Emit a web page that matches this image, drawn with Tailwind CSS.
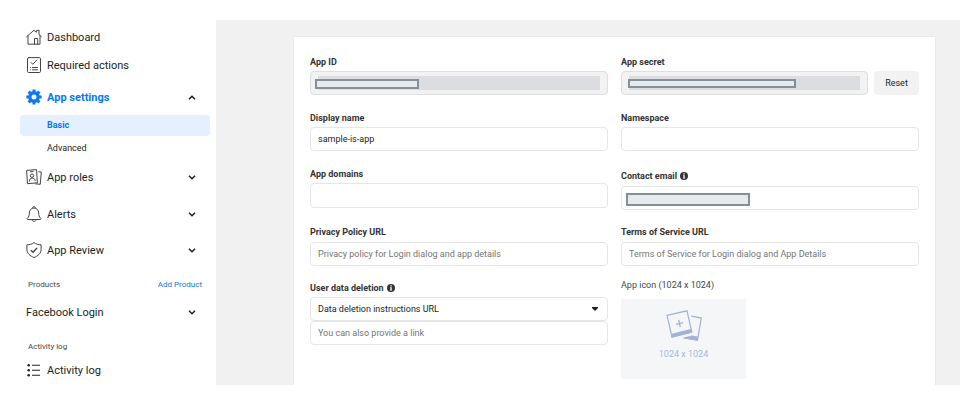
<!DOCTYPE html>
<html lang="en">
<head>
<meta charset="utf-8">
<title>App settings - Basic</title>
<script src="https://cdn.jsdelivr.net/npm/@tailwindcss/browser@4"></script>
</head>
<body class="bg-white font-['Roboto','Liberation_Sans',sans-serif] text-[#1c1e21]">
<div class="flex pt-5 pr-5 pl-5">
  <nav class="w-[196px] shrink-0 pt-[3px] pr-[6px] text-[11px] leading-[17px]" aria-label="App">
    <a href="#" class="flex h-7 items-center gap-[5px] pl-[6px]">
      <svg class="size-4" viewBox="0 0 16 16" fill="none" stroke="#444" stroke-width="1" stroke-linejoin="round" stroke-linecap="round"><path d="M.6 7.800 8 1.200l2.400 2.100V1.700l2.600-.7v4.600l2.400 2.200M2 6.700V15.200h12V6.700M8.500 15V9.500h3.200V15"/></svg>
      Dashboard</a>
    <a href="#" class="flex h-7 items-center gap-[5px] pl-[6px]">
      <svg class="size-4" viewBox="0 0 16 16" fill="none" stroke="#444" stroke-width="1" stroke-linecap="round"><rect x="1.500" y=".6" width="13" height="14.900" rx="1.200"/><path d="m5 5.500 1.800 1.800L10.800 3M6.500 10.500h5M6.500 12.800h5M4.300 10.500h.1M4.300 12.800h.1"/></svg>
      Required actions</a>
    <button type="button" class="flex h-9 w-full items-center gap-[5px] pr-[14px] pl-[6px] font-bold text-[#0a78f0]" aria-expanded="true">
      <svg class="size-4" viewBox="0 0 16 16" fill="none" stroke="#0a78f0"><circle cx="8" cy="8" r="4.200" stroke-width="3.400"/><path stroke-width="3" stroke-linecap="butt" d="M8 .4v2.400M8 13.200v2.400M.4 8h2.400M13.200 8h2.400M2.600 2.600l1.700 1.700M11.700 11.700l1.700 1.700M13.400 2.600l-1.700 1.700M4.300 11.700l-1.700 1.700"/></svg>
      App settings
      <svg class="ml-auto size-2" viewBox="0 0 8 8" fill="none" stroke="#1c1e21" stroke-width="1.500"><path d="M1 6.300 4 3.300l3 3"/></svg></button>
    <a href="#" class="flex h-[21px] items-center rounded bg-[#e5f0fe] pl-[27px] text-[9px] font-bold text-[#0a78f0]" aria-current="page">Basic</a>
    <a href="#" class="mt-px flex h-[22px] items-center pl-[27px] text-[9px]">Advanced</a>
    <button type="button" class="flex h-9 w-full items-center gap-[5px] pr-[14px] pl-[6px]">
      <svg class="size-4" viewBox="0 0 16 16" fill="none" stroke="#444" stroke-width="1" stroke-linejoin="round"><path d="M.6 1.400 10.500.6l.9 13.200-9.900.9zM12.300 2.700l3 .4-1.100 12.200-5-.5M4 2.800l3.500-.3"/><circle cx="6" cy="6.700" r="1.700"/><path d="M3.400 12.500c-.1-2.200 1-3.300 2.700-3.400 1.700-.1 2.900.9 3.100 3"/></svg>
      App roles
      <svg class="ml-auto size-2" viewBox="0 0 8 8" fill="none" stroke="#1c1e21" stroke-width="1.500"><path d="m1 2.800 3 3 3-3"/></svg></button>
    <button type="button" class="mt-px flex h-9 w-full items-center gap-[5px] pr-[14px] pl-[6px]">
      <svg class="size-4" viewBox="0 0 16 16" fill="none" stroke="#444" stroke-width="1" stroke-linejoin="round"><path d="M1 12.500c2.200-1.700 2.200-3.500 2.300-5.500C3.500 4 5.200 2 8 2s4.500 2 4.700 5c.1 2 .1 3.800 2.300 5.500 0 .6-.4 1-1 1H2c-.6 0-1-.4-1-1zM6.700 2.100c-.2-2 2.800-2 2.600 0M6 13.600c.2 2.300 3.800 2.300 4 0"/></svg>
      Alerts
      <svg class="ml-auto size-2" viewBox="0 0 8 8" fill="none" stroke="#1c1e21" stroke-width="1.500"><path d="m1 2.800 3 3 3-3"/></svg></button>
    <button type="button" class="flex h-9 w-full items-center gap-[5px] pr-[14px] pl-[6px]">
      <svg class="size-4" viewBox="0 0 16 16" fill="none" stroke="#444" stroke-width="1" stroke-linejoin="round"><path d="M8 .6C6 2.200 3.500 2.800.9 2.800v4.700c0 3.700 3.100 6.500 7.100 8 4-1.500 7.100-4.300 7.100-8V2.800C12.500 2.800 10 2.200 8 .6z"/><path stroke-width="1.400" d="m4.800 8.200 2.200 2.100 4-4.200"/></svg>
      App Review
      <svg class="ml-auto size-2" viewBox="0 0 8 8" fill="none" stroke="#1c1e21" stroke-width="1.500"><path d="m1 2.800 3 3 3-3"/></svg></button>
    <div class="flex h-8 items-center justify-between pr-2 pl-2 text-[8px] text-[#444950]">
      <h2>Products</h2><a href="#" class="text-[#1876d8]">Add Product</a></div>
    <button type="button" class="flex h-6 w-full items-center pr-[14px] pl-[6px]">
      Facebook Login
      <svg class="ml-auto size-2" viewBox="0 0 8 8" fill="none" stroke="#1c1e21" stroke-width="1.500"><path d="m1 2.800 3 3 3-3"/></svg></button>
    <h2 class="mt-3 flex h-5 items-center pl-2 text-[8px] text-[#444950]">Activity log</h2>
    <a href="#" class="flex h-7 items-center gap-[5px] pl-[6px]">
      <svg class="size-4" viewBox="0 0 16 16" fill="none" stroke="#222" stroke-width="1.100"><path d="M6 3.300h8M6 8.300h8M6 13.300h8"/><g fill="#222" stroke="none"><circle cx="2.700" cy="3.300" r="1.300"/><circle cx="2.700" cy="8.300" r="1.300"/><circle cx="2.700" cy="13.300" r="1.300"/></g></svg>
      Activity log</a>
  </nav>

  <main class="grow bg-[#f1f1f1] pt-[17px] pr-[25px] pl-[78px]">
    <form class="grid grid-cols-2 gap-x-[13px] bg-white px-4 pt-[17px] pb-[6px] text-[9px] leading-4 shadow-[0_0_1px_#ccc]">
      <div>
        <label for="app-id" class="block font-bold text-[#333]">App ID</label>
        <div class="relative mt-px flex h-6 items-center rounded border border-[#dfdfdf] bg-[#f2f2f2] px-[7px]">
          <input id="app-id" disabled class="h-[14px] w-full bg-[#dcdde1]">
          <span class="absolute top-[7px] left-1 h-[10px] w-[104px] border-2 border-[#848f97] bg-[#e6eaed]"></span>
        </div>
        <label for="display-name" class="mt-[15px] block font-bold text-[#333]">Display name</label>
        <input id="display-name" value="sample-is-app" class="mt-px block h-6 w-full rounded border border-[#e6e6e6] px-[7px]">
        <label for="domains" class="mt-[15px] block font-bold text-[#333]">App domains</label>
        <input id="domains" class="mt-px block h-[25px] w-full rounded border border-[#e6e6e6] px-[7px]">
        <label for="privacy" class="mt-4 block font-bold text-[#333]">Privacy Policy URL</label>
        <input id="privacy" placeholder="Privacy policy for Login dialog and app details" class="mt-[2px] block h-6 w-full rounded border border-[#e6e6e6] px-[7px] placeholder:text-[#757575]">
        <label for="deletion" class="mt-[14px] flex items-center gap-[3px] font-bold text-[#333]">User data deletion
          <svg class="size-2" viewBox="0 0 8 8"><circle cx="4" cy="4" r="4" fill="#333"/><path fill="#fff" d="M3.400 1.300h1.300v1.200H3.400zM3 3.200h1.700v2.500h.5v.8H2.900v-.8h.5V4H3z"/></svg></label>
        <div class="relative mt-px">
          <select id="deletion" class="block h-6 w-full appearance-none rounded border border-[#e6e6e6] px-[7px]"><option>Data deletion instructions URL</option></select>
          <svg class="pointer-events-none absolute top-[10px] right-[10px] h-1 w-[6px]" viewBox="0 0 6 4"><path fill="#1c1e21" d="M0 0h6v1L3 4 0 1z"/></svg>
        </div>
        <input aria-label="Data deletion link" placeholder="You can also provide a link" class="block h-6 w-full rounded border border-[#e6e6e6] px-[7px] placeholder:text-[#757575]">
      </div>
      <div>
        <label for="secret" class="block font-bold text-[#333]">App secret</label>
        <div class="mt-px flex gap-[6px]">
          <div class="relative flex h-6 grow items-center rounded border border-[#dfdfdf] bg-[#f2f2f2] px-[7px]">
            <input id="secret" disabled class="h-[14px] w-full bg-[#dcdde1]">
            <span class="absolute top-[7px] left-[6px] h-[9px] w-[168px] border-2 border-[#848f97] bg-[#e6eaed]"></span>
          </div>
          <button type="button" class="h-6 w-[45px] rounded bg-[#f2f2f2]">Reset</button>
        </div>
        <label for="namespace" class="mt-[15px] block font-bold text-[#333]">Namespace</label>
        <input id="namespace" class="mt-px block h-6 w-full rounded border border-[#e6e6e6] px-[7px]">
        <label for="email" class="mt-[17px] flex items-center gap-[3px] font-bold text-[#333]">Contact email
          <svg class="size-2" viewBox="0 0 8 8"><circle cx="4" cy="4" r="4" fill="#333"/><path fill="#fff" d="M3.400 1.300h1.300v1.200H3.400zM3 3.200h1.700v2.500h.5v.8H2.900v-.8h.5V4H3z"/></svg></label>
        <div class="relative mt-[2px]">
          <input id="email" type="email" class="block h-6 w-full rounded border border-[#e6e6e6] px-[7px]">
          <span class="absolute top-[7px] left-[5px] h-[13px] w-[124px] border-2 border-[#848f97] bg-[#e6eaed]"></span>
        </div>
        <label for="terms" class="mt-[14px] block font-bold text-[#333]">Terms of Service URL</label>
        <input id="terms" placeholder="Terms of Service for Login dialog and App Details" class="mt-[2px] block h-6 w-full rounded border border-[#e6e6e6] px-[7px] placeholder:text-[#757575]">
        <h3 id="icon-label" class="mt-[11px] text-[#444950]">App icon (1024 x 1024)</h3>
        <button type="button" aria-labelledby="icon-label" class="mt-[6px] flex h-20 w-[125px] flex-col items-center bg-[#f5f6f8] pt-[10px] text-[#a5b9da]">
          <svg class="h-8 w-9" viewBox="0 0 36 32" fill="none" stroke="#a3b2d6"><path d="m25.500 7.200 9.800 1.900-3.800 22-13-2.300" stroke-width="1.200"/><path fill="#a3b2d6" stroke="none" d="m26 26.500 6 1-.7 4.300-15.300-2.700z"/><path d="m1 6.300 20-4.500L25.800 23 6 28z" fill="#f5f6f8" stroke-width="1.200"/><path fill="#a3b2d6" stroke="none" d="m5 25 20.500-5.200.9 3.700L5.600 28.700z"/><path stroke-width="1.300" d="m10 15.300 7-1.600M12.700 11l1.600 7"/></svg>
          <span class="mt-[5px]">1024 x 1024</span>
        </button>
      </div>
    </form>
  </main>
</div>
</body>
</html>
